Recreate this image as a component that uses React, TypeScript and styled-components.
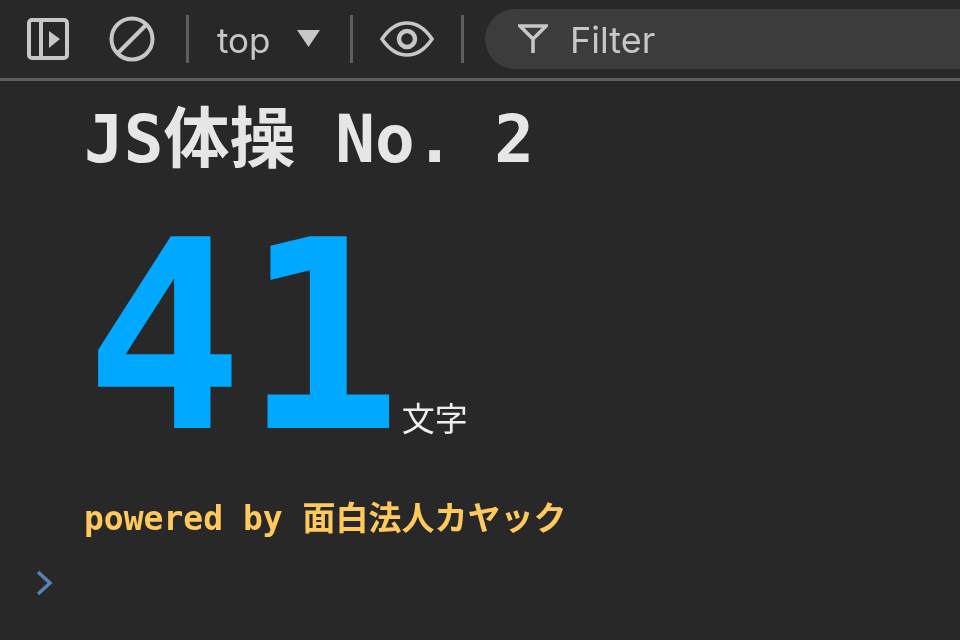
import React from "react";
import styled, { createGlobalStyle } from "styled-components";

const Global = createGlobalStyle`
  html, body { margin: 0; padding: 0; background: #282828; width: 960px; height: 640px; overflow: hidden; }
`;

const Page = styled.div`
  width: 960px;
  height: 640px;
  overflow: hidden;
  background: #282828;
  display: flex;
  flex-direction: column;
`;

const Toolbar = styled.div`
  height: 78px;
  flex: none;
  box-sizing: content-box;
  border-bottom: 3px solid #5e5e5e;
  display: flex;
  align-items: center;
  color: #c7c7c7;
  font-family: Inter, "Liberation Sans", sans-serif;
`;

const IconSlot = styled.div<{ $w: number; $ml: number }>`
  width: ${(p) => p.$w}px;
  margin-left: ${(p) => p.$ml}px;
  flex: none;
  display: flex;
  align-items: center;
  justify-content: center;
`;

const Divider = styled.div<{ $ml: number }>`
  width: 3px;
  height: 48px;
  margin-left: ${(p) => p.$ml}px;
  flex: none;
  background: #5e5e5e;
`;

const Context = styled.span`
  margin-left: 28px;
  padding-top: 2px;
  font-size: 35px;
  line-height: 40px;
  flex: none;
  will-change: transform;
`;

const FilterBox = styled.div`
  margin-left: 21px;
  flex: 1;
  height: 60px;
  border-radius: 30px 0 0 30px;
  background: #3c3c3c;
  display: flex;
  align-items: center;
  padding-left: 33px;
`;

const FilterLabel = styled.span`
  margin-left: 22px;
  padding-top: 2px;
  font-size: 36px;
  color: #c7c7c7;
  will-change: transform;
`;

const Body = styled.div`
  flex: 1;
  padding: 0 0 0 84px;
  position: relative;
  font-family: "DejaVu Sans Mono", "Noto Sans CJK JP", monospace;
  will-change: transform;
`;

const Title = styled.div`
  font-size: 66px;
  line-height: 74px;
  margin-top: 22px;
  font-weight: 700;
  color: #e6e6e6;
  white-space: pre;
`;

const CountRow = styled.div`
  margin-top: 25px;
  margin-left: 1px;
  height: 270px;
  line-height: 270px;
  white-space: nowrap;
`;

const CountValue = styled.span`
  font-size: 263px;
  font-weight: 700;
  color: #00a8ff;
`;

const CountUnit = styled.span`
  font-size: 33px;
  color: #eeeeee;
  vertical-align: -3px;
  font-family: "Noto Sans CJK JP", sans-serif;
`;

const Powered = styled.div`
  font-size: 33px;
  line-height: 40px;
  margin-top: 27px;
  font-weight: 700;
  color: #ffc95e;
  white-space: pre;
`;

const Prompt = styled.div`
  position: absolute;
  left: 36px;
  top: 489px;
  display: flex;
`;

export default function App() {
  return (
    <Page>
      <Global />
      <Toolbar>
        <IconSlot $w={42} $ml={27}>
          <svg width="42" height="42" viewBox="0 0 42 42" fill="none">
            <rect x="2" y="2" width="38" height="38" rx="3" stroke="#c7c7c7" strokeWidth="4" />
            <rect x="12" y="2" width="4" height="38" fill="#c7c7c7" />
            <path d="M22 13 L33 21 L22 30 Z" fill="#c7c7c7" />
          </svg>
        </IconSlot>
        <IconSlot $w={46} $ml={40}>
          <svg width="46" height="46" viewBox="0 0 46 46" fill="none" stroke="#c7c7c7" strokeWidth="4">
            <circle cx="23" cy="23" r="20.5" />
            <path d="M9 37 L37 9" />
          </svg>
        </IconSlot>
        <Divider $ml={31} />
        <Context>top</Context>
        <IconSlot $w={24} $ml={26}>
          <svg width="24" height="18" viewBox="0 0 24 18">
            <path d="M0 0 H23 L11.5 17 Z" fill="#c7c7c7" />
          </svg>
        </IconSlot>
        <Divider $ml={29} />
        <IconSlot $w={54} $ml={27}>
          <svg width="54" height="36" viewBox="0 0 54 36" fill="none" stroke="#c7c7c7" strokeWidth="3.5">
            <path d="M2 18 C10 6 18 2 27 2 C36 2 44 6 52 18 C44 30 36 34 27 34 C18 34 10 30 2 18 Z" />
            <circle cx="27" cy="18" r="8" strokeWidth="4.5" />
          </svg>
        </IconSlot>
        <Divider $ml={27} />
        <FilterBox>
          <svg width="30" height="30" viewBox="0 0 30 30" fill="none" stroke="#c7c7c7" strokeWidth="3.5">
            <path d="M2 2 H28 L15 15 Z M15 15 V29" />
          </svg>
          <FilterLabel>Filter</FilterLabel>
        </FilterBox>
      </Toolbar>
      <Body>
        <Title>JS体操 No. 2</Title>
        <CountRow>
          <CountValue>41</CountValue>
          <CountUnit>文字</CountUnit>
        </CountRow>
        <Powered>powered by 面白法人カヤック</Powered>
        <Prompt>
          <svg width="18" height="26" viewBox="0 0 18 26" fill="none" stroke="#5b7fb8" strokeWidth="3.5">
            <path d="M2 2 L14 13 L2 24" />
          </svg>
        </Prompt>
      </Body>
    </Page>
  );
}
